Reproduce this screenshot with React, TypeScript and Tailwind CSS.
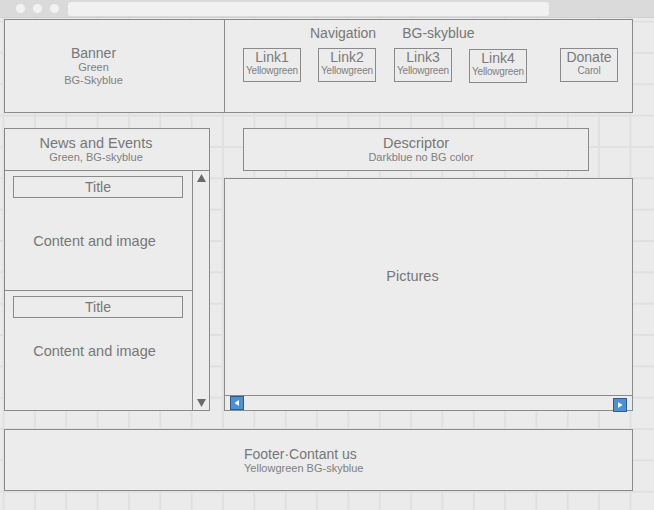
const box = "border border-[#8a8a8a] bg-[#ececec]";

function LinkBox({ label, sub, className = "" }: { label: string; sub: string; className?: string }) {
  return (
    <div className={`w-[58px] h-[34px] flex flex-col items-center ${box} ${className}`}>
      <span className="text-[14px] leading-[16px] text-[#7a7a7a]">{label}</span>
      <span className="text-[10px] leading-[12px] text-[#808080] tracking-[-0.2px]">{sub}</span>
    </div>
  );
}

function NewsItem({ last = false, gap }: { last?: boolean; gap: string }) {
  return (
    <div className={`h-[120px] shrink-0 flex flex-col ${last ? "" : "border-b border-[#8a8a8a]"}`}>
      <div className={`mt-[5px] ml-[8px] w-[170px] h-[22px] flex items-center justify-center ${box}`}>
        <span className="text-[14px] leading-[16px]">Title</span>
      </div>
      <div className={`${gap} text-center pr-[8px] text-[14.5px] leading-[16px]`}>Content and image</div>
    </div>
  );
}

function BlueButton({ dir }: { dir: "left" | "right" }) {
  return (
    <div className="w-[14px] h-[14px] bg-[#4a92d8] border border-[#2e5d8c] flex items-center justify-center">
      <svg width="8" height="8" viewBox="0 0 8 8">
        {dir === "left" ? <polygon points="6,1 6,7 1.5,4" fill="#fff" /> : <polygon points="2,1 2,7 6.5,4" fill="#fff" />}
      </svg>
    </div>
  );
}

export default function App() {
  return (
    <div className="w-[654px] h-[510px] overflow-hidden bg-[#ebebeb] text-[#777] font-['Liberation_Sans',Arial,sans-serif]">
      {/* browser chrome */}
      <div className="h-[18px] bg-[#dadada] border-b border-[#d0d0d0] flex items-center">
        <div className="ml-[16px] w-[9px] h-[9px] rounded-full bg-[#f2f2f2]" />
        <div className="ml-[8px] w-[9px] h-[9px] rounded-full bg-[#f2f2f2]" />
        <div className="ml-[8px] w-[9px] h-[9px] rounded-full bg-[#f2f2f2]" />
        <div className="ml-[9px] w-[481px] h-[14px] rounded-[3px] bg-[#f1f1f1]" />
      </div>

      <div className="h-[492px] pl-[4px] pt-[1px] bg-[linear-gradient(to_right,#e0e0e0_2px,transparent_2px),linear-gradient(to_bottom,#e0e0e0_2px,transparent_2px)] bg-size-[31.35px_31.35px] bg-position-[2.6px_2.6px]">
        {/* header */}
        <div className={`w-[629px] h-[94px] flex ${box}`}>
          <div className="w-[220px] border-r border-[#8a8a8a] pt-[25px]">
            <div className="w-[177px] flex flex-col items-center">
              <span className="text-[14px] leading-[16px]">Banner</span>
              <span className="text-[11px] leading-[13px] text-[#808080]">Green</span>
              <span className="text-[11px] leading-[13px] text-[#808080]">BG-Skyblue</span>
            </div>
          </div>
          <div className="flex-1 flex flex-col pt-[5px]">
            <div className="flex gap-[26px] pl-[85px] text-[14px] leading-[16px]">
              <span>Navigation</span>
              <span>BG-skyblue</span>
            </div>
            <div className="flex items-start mt-[7px] pl-[18px]">
              <LinkBox label="Link1" sub="Yellowgreen" />
              <LinkBox label="Link2" sub="Yellowgreen" className="ml-[17px]" />
              <LinkBox label="Link3" sub="Yellowgreen" className="ml-[18px]" />
              <LinkBox label="Link4" sub="Yellowgreen" className="ml-[17px] mt-[1px]" />
              <LinkBox label="Donate" sub="Carol" className="ml-[33px]" />
            </div>
          </div>
        </div>

        {/* main row */}
        <div className="flex mt-[15px] h-[283px]">
          <div className={`w-[206px] flex flex-col ${box}`}>
            <div className="h-[42px] shrink-0 border-b border-[#8a8a8a] pt-[6px] pr-[22px] flex flex-col items-center">
              <span className="text-[14.5px] leading-[16px]">News and Events</span>
              <span className="text-[11px] leading-[13px] text-[#808080]">Green, BG-skyblue</span>
            </div>
            <div className="flex flex-1 min-h-0">
              <div className="flex-1 flex flex-col overflow-hidden">
                <NewsItem gap="mt-[35px]" />
                <NewsItem gap="mt-[25px]" last />
              </div>
              <div className="w-[17px] border-l border-[#8a8a8a] flex flex-col items-center justify-between pt-[3px] pb-[3px]">
                <svg width="9" height="8" viewBox="0 0 9 8"><polygon points="4.5,0 9,8 0,8" fill="#6a6a6a" /></svg>
                <svg width="9" height="8" viewBox="0 0 9 8"><polygon points="0,0 9,0 4.5,8" fill="#6a6a6a" /></svg>
              </div>
            </div>
          </div>

          <div className="ml-[14px] w-[409px] flex flex-col">
            <div className="ml-[19px] w-[346px] h-[43px] shrink-0 pt-[6px] flex flex-col items-center border border-[#8a8a8a] bg-[#ececec]">
              <span className="text-[14.5px] leading-[16px]">Descriptor</span>
              <span className="text-[11px] leading-[13px] text-[#808080] pl-[10px]">Darkblue no BG color</span>
            </div>
            <div className={`mt-[7px] flex-1 flex flex-col relative ${box}`}>
              <div className="flex-1 flex justify-center pt-[89px] pr-[32px]">
                <span className="text-[14.5px] leading-[16px]">Pictures</span>
              </div>
              <div className="h-[15px] border-t border-[#8a8a8a] flex items-start pl-[5px]">
                <BlueButton dir="left" />
              </div>
              <div className="absolute right-[5px] bottom-[-2px]">
                <BlueButton dir="right" />
              </div>
            </div>
          </div>
        </div>

        {/* footer */}
        <div className={`mt-[18px] w-[629px] h-[62px] pt-[16px] pl-[239px] flex flex-col items-start ${box}`}>
          <span className="text-[14px] leading-[16px]">Footer·Contant us</span>
          <span className="text-[11px] leading-[13px] text-[#808080]">Yellowgreen BG-skyblue</span>
        </div>
      </div>
    </div>
  );
}
